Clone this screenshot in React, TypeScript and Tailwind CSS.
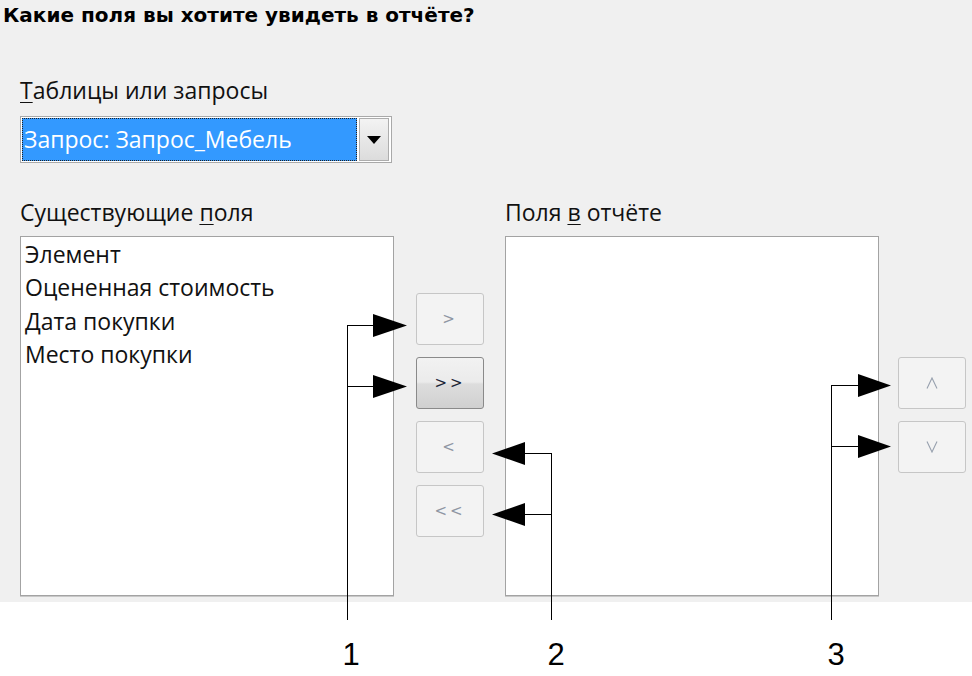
import React from "react";

const body = "font-['Open_Sans','Noto_Sans',sans-serif]";

function DisabledBtn({ children }: { children: React.ReactNode }) {
  return (
    <div className="w-[68px] h-[52px] rounded-[3px] border border-[#c6c6c6] bg-[#f3f3f3] flex items-center justify-center text-[15px] text-[#8f96a3] font-['DejaVu_Sans',sans-serif] tracking-[3px]">
      {children}
    </div>
  );
}

function ActiveBtn({ children }: { children: React.ReactNode }) {
  return (
    <div className="w-[68px] h-[52px] rounded-[3px] border border-[#8a8a8a] bg-[linear-gradient(#f2f2f2_0%,#ebebeb_48%,#dddddd_52%,#d0d0d0_100%)] flex items-center justify-center text-[15px] text-[#1b2435] font-['DejaVu_Sans',sans-serif] tracking-[3px]">
      {children}
    </div>
  );
}

export default function App() {
  return (
    <div className="relative w-[972px] h-[676px] bg-white overflow-hidden">
      <div className={`h-[602px] bg-[#f0f0f0] ${body} text-[23px] text-[#111]`}>
        <div className="pt-[3px] pl-[3px] h-[27px] leading-[24px] text-[20px] font-bold font-['DejaVu_Sans',sans-serif] text-black">
          Какие поля вы хотите увидеть в отчёте?
        </div>
        <div className="mt-[48px] pl-[20px] h-[30px] leading-[30px]">
          <span className="underline underline-offset-[3px] decoration-1">Т</span>аблицы или запросы
        </div>
        <div className="mt-[11px] ml-[20px] w-[372px] h-[47px] border border-[#a9a9a9] bg-white p-[1px] flex gap-[2px]">
          <div className="w-[335px] h-[43px] bg-[#3399ff] border border-dotted border-[#222] text-white leading-[40px] pl-[1px]">
            Запрос: Запрос_Мебель
          </div>
          <div className="w-[30px] h-[43px] border border-[#adadad] bg-[linear-gradient(#f3f3f3,#dcdcdc)] flex items-center justify-center">
            <svg width="14" height="8" viewBox="0 0 14 8">
              <polygon points="0,0 14,0 7,8" fill="#000" />
            </svg>
          </div>
        </div>
        <div className="mt-[34px] flex h-[30px] leading-[30px]">
          <div className="ml-[20px] w-[485px]">
            Существующие <span className="underline underline-offset-[3px] decoration-1">п</span>оля
          </div>
          <div>
            Поля <span className="underline underline-offset-[3px] decoration-1">в</span> отчёте
          </div>
        </div>
        <div className="mt-[9px] flex items-start">
          <div className="ml-[20px] w-[374px] h-[360px] bg-white border border-[#a3a3a3] shadow-[0_1px_0_#c8c8c8] pl-[4px] pt-[1px] leading-[33.3px]">
            <div>Элемент</div>
            <div>Оцененная стоимость</div>
            <div>Дата покупки</div>
            <div>Место покупки</div>
          </div>
          <div className="ml-[22px] mt-[57px] flex flex-col gap-[12px]">
            <DisabledBtn>{">"}</DisabledBtn>
            <ActiveBtn>{">>"}</ActiveBtn>
            <DisabledBtn>{"<"}</DisabledBtn>
            <DisabledBtn>{"<<"}</DisabledBtn>
          </div>
          <div className="ml-[21px] w-[374px] h-[360px] bg-white border border-[#a3a3a3] shadow-[0_1px_0_#c8c8c8]" />
          <div className="ml-[19px] mt-[121px] flex flex-col gap-[12px]">
            <DisabledBtn>
              <svg width="12" height="12" viewBox="0 0 12 12">
                <polyline points="1,11.5 6,1 11,11.5" fill="none" stroke="#97a0ae" strokeWidth="1.1" />
              </svg>
            </DisabledBtn>
            <DisabledBtn>
              <svg width="12" height="12" viewBox="0 0 12 12">
                <polyline points="1,0.5 6,11 11,0.5" fill="none" stroke="#97a0ae" strokeWidth="1.1" />
              </svg>
            </DisabledBtn>
          </div>
        </div>
      </div>

      <svg className="absolute left-0 top-0 pointer-events-none" width="972" height="676" viewBox="0 0 972 676">
        <g stroke="#000" strokeWidth="1" fill="none">
          <path d="M347.5 325 V620 M347 325.5 H376 M347 386.5 H376" />
          <path d="M551.5 453 V620 M524 453.5 H552 M524 514.5 H552" />
          <path d="M831.5 385 V620 M831 385.5 H860 M831 446.5 H860" />
        </g>
        <g fill="#000">
          <polygon points="373,314 407,325.5 373,337" />
          <polygon points="373,375 407,386.5 373,398" />
          <polygon points="525,442 492,453.5 525,465" />
          <polygon points="525,503 492,514.5 525,526" />
          <polygon points="858,374 891,385.5 858,397" />
          <polygon points="858,435 891,446.5 858,458" />
        </g>
      </svg>

      <div className="absolute left-[331px] top-[639px] w-[40px] text-center text-[31px] leading-[31px] font-['Liberation_Sans',sans-serif] text-black">1</div>
      <div className="absolute left-[536px] top-[639px] w-[40px] text-center text-[31px] leading-[31px] font-['Liberation_Sans',sans-serif] text-black">2</div>
      <div className="absolute left-[816px] top-[639px] w-[40px] text-center text-[31px] leading-[31px] font-['Liberation_Sans',sans-serif] text-black">3</div>
    </div>
  );
}
